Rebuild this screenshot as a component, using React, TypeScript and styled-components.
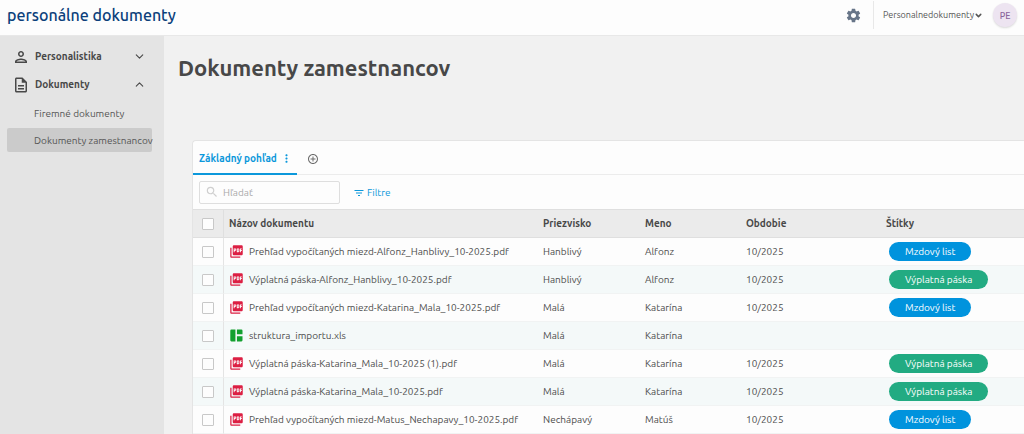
import React from "react";
import styled, { createGlobalStyle } from "styled-components";
import { FiChevronDown, FiChevronUp } from "react-icons/fi";
import {
  MdAddCircleOutline,
  MdFilterList,
  MdMoreVert,
  MdOutlineDescription,
  MdOutlinePerson,
  MdPictureAsPdf,
  MdSearch,
  MdSettings,
} from "react-icons/md";

const GlobalStyle = createGlobalStyle`
  *, *::before, *::after { box-sizing: border-box; }
  body {
    margin: 0;
    background: #f1f1f1;
    color: #484848;
    font-family: Ubuntu, "Noto Sans", "Open Sans", sans-serif;
    font-size: 10px;
    line-height: 16px;
  }
  button, input { font: inherit; color: inherit; }
  button { border: 0; padding: 0; background: none; cursor: pointer; }
  svg { display: block; flex: none; }
`;

const Page = styled.div`
  display: flex;
  flex-direction: column;
  min-height: 100vh;
`;

const TopBar = styled.header`
  display: flex;
  align-items: flex-start;
  justify-content: space-between;
  height: 36px;
  padding: 0 7px;
  background: #fdfdfd;
  border-bottom: 1px solid #e8e8e8;
`;

const Brand = styled.a`
  padding-top: 3px;
  color: #0b3f7b;
  font-size: 16px;
  line-height: 24px;
  font-weight: 500;
  text-decoration: none;
`;

const Account = styled.div`
  display: flex;
  align-items: center;
  height: 30px;
`;

const SettingsButton = styled.button`
  margin-right: 11px;
  color: #677588;
`;

const AccountButton = styled.button`
  display: flex;
  align-items: center;
  height: 28px;
  margin-right: 10px;
  padding-left: 9px;
  border-left: 1px solid #e8e8e8;
  color: #555;
  font-size: 9px;
`;

const Avatar = styled.span`
  display: flex;
  align-items: center;
  justify-content: center;
  width: 24px;
  height: 24px;
  padding-top: 2px;
  border-radius: 50%;
  background: #ede4f1;
  box-shadow: 0 1px 2px #d8d8d8;
  color: #8a659c;
  font-size: 9px;
  font-weight: 500;
`;

const Body = styled.div`
  display: flex;
  flex: 1;
`;

const Sidebar = styled.nav`
  flex: none;
  width: 164px;
  padding: 6px 12px 0 7px;
  background: #e4e4e4;
`;

const GroupButton = styled.button`
  display: flex;
  align-items: center;
  width: 100%;
  height: 28px;
  padding: 1px 6px 0 5px;
  font-weight: 700;
  text-align: left;
`;

const GroupLabel = styled.span`
  flex: 1;
  padding: 1px 0 0 5px;
`;

const SubLink = styled.a<{ $active?: boolean }>`
  display: flex;
  align-items: center;
  height: 24px;
  margin-top: 3px;
  padding: 1px 0 0 27px;
  border-radius: 2px;
  background: ${(p) => (p.$active ? "#cbcbcb" : "transparent")};
  color: #555;
  text-decoration: none;
  white-space: nowrap;
`;

const Main = styled.main`
  flex: 1;
  min-width: 0;
`;

const Title = styled.h1`
  margin: 0;
  padding: 16px 14px 56px;
  font-size: 22px;
  line-height: 32px;
  font-weight: 700;
`;

const Panel = styled.section`
  margin-left: 28px;
  border: 1px solid #e4e4e4;
  border-width: 1px 0 0 1px;
  border-radius: 4px 0 0 0;
  background: #fdfdfd;
`;

const TabBar = styled.div`
  display: flex;
  align-items: stretch;
  height: 34px;
  border-bottom: 1px solid #ececec;
`;

const Tab = styled.div`
  display: flex;
  align-items: center;
  gap: 3px;
  height: 34px;
  padding: 2px 4px 0 6px;
  border-bottom: 2px solid #0c98db;
  color: #0c98db;
`;

const TabButton = styled.button`
  padding-top: 1px;
  font-weight: 700;
`;

const AddTab = styled.button`
  padding: 3px 10px 0;
  color: #6c6c6c;
`;

const Toolbar = styled.div`
  display: flex;
  align-items: center;
  gap: 13px;
  height: 34px;
  padding: 0 6px;
`;

const SearchBox = styled.label`
  display: flex;
  align-items: center;
  gap: 4px;
  width: 141px;
  height: 23px;
  padding: 0 5px;
  border: 1px solid #dedede;
  border-radius: 2px;
  color: #cfcfcf;
`;

const SearchInput = styled.input`
  width: 100%;
  min-width: 0;
  padding: 2px 0 0;
  border: 0;
  outline: 0;
  background: transparent;
  color: #484848;
  &::placeholder { color: #aaa; opacity: 1; }
`;

const FilterButton = styled.button`
  display: flex;
  align-items: center;
  gap: 2px;
  padding-top: 1px;
  color: #0c98db;
`;

const Table = styled.table`
  width: 100%;
  table-layout: fixed;
  border-collapse: separate;
  border-spacing: 0;
`;

const Col = styled.col<{ $width?: number }>`
  width: ${(p) => (p.$width ? `${p.$width}px` : "auto")};
`;

const HeadCell = styled.th`
  height: 29px;
  padding: 1px 5px 0;
  background: #ebebeb;
  border: 1px solid #dfdfdf;
  border-width: 1px 0;
  font-weight: 700;
  text-align: left;
  &:first-child { padding-top: 0; border-right-width: 1px; }
`;

const Row = styled.tr`
  background: #fdfdfd;
  &:nth-child(even) { background: #f4f9f9; }
`;

const Cell = styled.td`
  height: 28px;
  padding: 0 5px;
  border-bottom: 1px solid #f1f3f3;
  color: #4c4c4c;
  white-space: nowrap;
  &:first-child { border-right: 1px solid #e4e4e4; }
`;

const Check = styled.input`
  display: block;
  appearance: none;
  width: 12px;
  height: 12px;
  margin: 0 auto;
  border: 1px solid #c8c8c8;
  border-radius: 1px;
  background: #fdfdfd;
  &:checked { background: #0c98db; }
`;

const FileName = styled.div`
  display: flex;
  align-items: center;
  gap: 5px;
`;

const Tag = styled.span<{ $tone: string }>`
  display: block;
  width: fit-content;
  height: 19px;
  margin-left: 3px;
  padding: 0 16px;
  border-radius: 10px;
  background: ${(p) => p.$tone};
  color: #fff;
  line-height: 20px;
`;

const SheetIcon = () => (
  <svg width="15" height="15" viewBox="0 0 14 14" fill="#13a02f" aria-hidden="true">
    <path d="M2.2 1.5H6v11H2.2a1 1 0 0 1-1-1v-9a1 1 0 0 1 1-1zM7.4 1.5h4.2a1 1 0 0 1 1 1v3.3H7.4zM7.4 7.6h5.2v3.9a1 1 0 0 1-1 1H7.4z" />
  </svg>
);

const tones: Record<string, string> = {
  "Mzdový list": "#0093dd",
  "Výplatná páska": "#22ab82",
};

const documents = [
  ["Prehľad vypočítaných miezd-Alfonz_Hanblivy_10-2025.pdf", "Hanblivý", "Alfonz", "10/2025", "Mzdový list"],
  ["Výplatná páska-Alfonz_Hanblivy_10-2025.pdf", "Hanblivý", "Alfonz", "10/2025", "Výplatná páska"],
  ["Prehľad vypočítaných miezd-Katarina_Mala_10-2025.pdf", "Malá", "Katarína", "10/2025", "Mzdový list"],
  ["struktura_importu.xls", "Malá", "Katarína", "", ""],
  ["Výplatná páska-Katarina_Mala_10-2025 (1).pdf", "Malá", "Katarína", "10/2025", "Výplatná páska"],
  ["Výplatná páska-Katarina_Mala_10-2025.pdf", "Malá", "Katarína", "10/2025", "Výplatná páska"],
  ["Prehľad vypočítaných miezd-Matus_Nechapavy_10-2025.pdf", "Nechápavý", "Matúš", "10/2025", "Mzdový list"],
];

export default function App() {
  return (
    <Page>
      <GlobalStyle />
      <TopBar>
        <Brand href="#">personálne dokumenty</Brand>
        <Account>
          <SettingsButton aria-label="Nastavenia"><MdSettings size={17} /></SettingsButton>
          <AccountButton>
            Personalnedokumenty
            <FiChevronDown size={9} strokeWidth={4} />
          </AccountButton>
          <Avatar>PE</Avatar>
        </Account>
      </TopBar>
      <Body>
        <Sidebar>
          <GroupButton aria-expanded={false}>
            <MdOutlinePerson size={18} />
            <GroupLabel>Personalistika</GroupLabel>
            <FiChevronDown size={13} />
          </GroupButton>
          <GroupButton aria-expanded={true}>
            <MdOutlineDescription size={18} />
            <GroupLabel>Dokumenty</GroupLabel>
            <FiChevronUp size={13} />
          </GroupButton>
          <SubLink href="#">Firemné dokumenty</SubLink>
          <SubLink href="#" $active>Dokumenty zamestnancov</SubLink>
        </Sidebar>
        <Main>
          <Title>Dokumenty zamestnancov</Title>
          <Panel>
            <TabBar>
              <Tab>
                <TabButton>Základný pohľad</TabButton>
                <button aria-label="Možnosti pohľadu"><MdMoreVert size={13} /></button>
              </Tab>
              <AddTab aria-label="Pridať pohľad"><MdAddCircleOutline size={12} /></AddTab>
            </TabBar>
            <Toolbar>
              <SearchBox>
                <MdSearch size={14} />
                <SearchInput type="text" placeholder="Hľadať" aria-label="Hľadať" />
              </SearchBox>
              <FilterButton>
                <MdFilterList size={12} />
                Filtre
              </FilterButton>
            </Toolbar>
            <Table>
              <colgroup>
                <Col $width={31} />
                <Col $width={314} />
                <Col $width={102} />
                <Col $width={101} />
                <Col $width={140} />
                <Col />
              </colgroup>
              <thead>
                <tr>
                  <HeadCell><Check type="checkbox" aria-label="Vybrať všetko" /></HeadCell>
                  <HeadCell>Názov dokumentu</HeadCell>
                  <HeadCell>Priezvisko</HeadCell>
                  <HeadCell>Meno</HeadCell>
                  <HeadCell>Obdobie</HeadCell>
                  <HeadCell>Štítky</HeadCell>
                </tr>
              </thead>
              <tbody>
                {documents.map(([file, surname, name, period, tag]) => (
                  <Row key={file}>
                    <Cell><Check type="checkbox" aria-label={file} /></Cell>
                    <Cell>
                      <FileName>
                        {file.endsWith(".pdf") ? <MdPictureAsPdf size={15} color="#dc1f43" /> : <SheetIcon />}
                        {file}
                      </FileName>
                    </Cell>
                    <Cell>{surname}</Cell>
                    <Cell>{name}</Cell>
                    <Cell>{period}</Cell>
                    <Cell>{tag && <Tag $tone={tones[tag]}>{tag}</Tag>}</Cell>
                  </Row>
                ))}
              </tbody>
            </Table>
          </Panel>
        </Main>
      </Body>
    </Page>
  );
}
